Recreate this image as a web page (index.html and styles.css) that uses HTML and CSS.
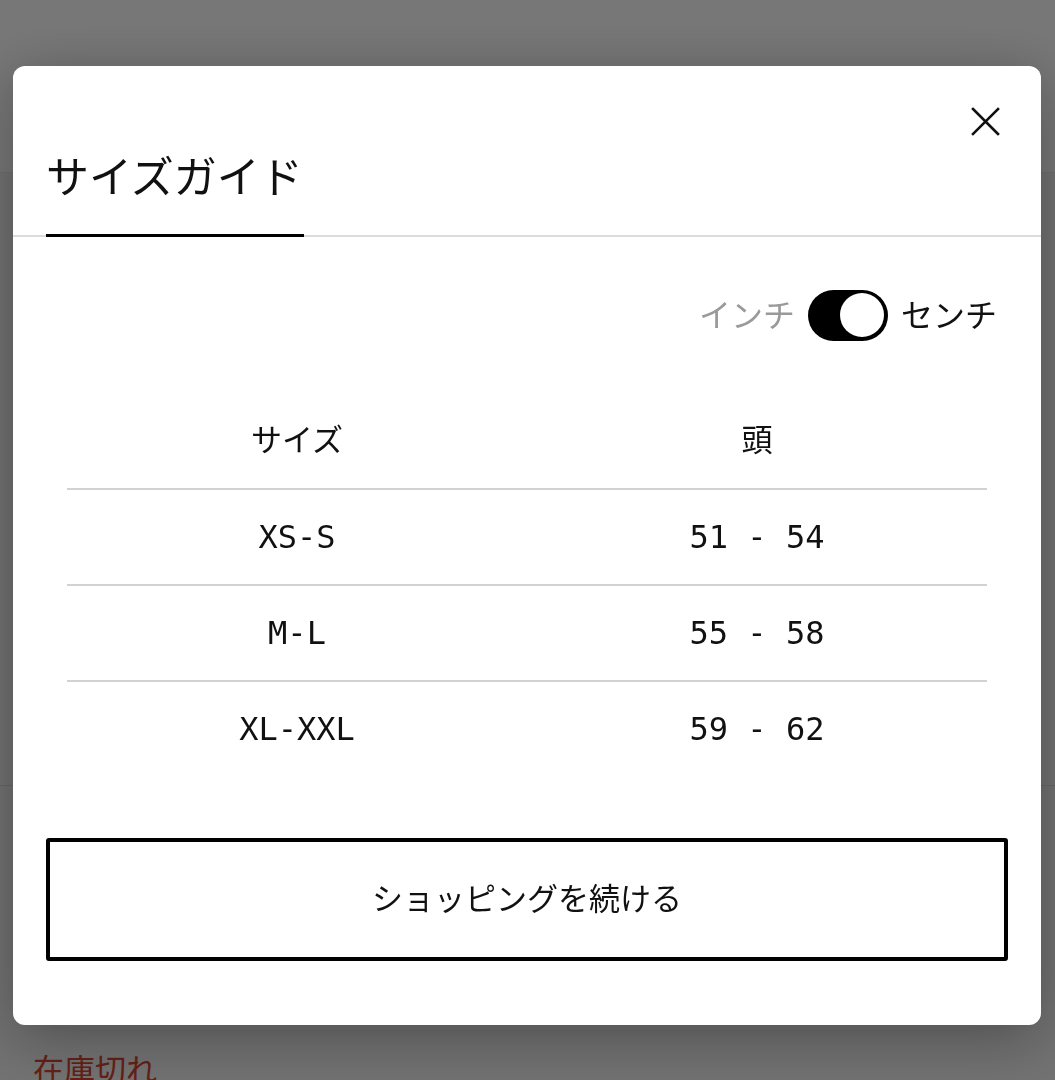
FILE: index.html
```html
<!DOCTYPE html>
<html lang="ja">
<head>
<meta charset="utf-8">
<title>サイズガイド</title>
<link rel="stylesheet" href="styles.css">
</head>
<body>
<div class="page">
  <div class="page-header"></div>
  <div class="page-main"></div>
  <div class="page-lower">
    <p class="stock">在庫切れ</p>
  </div>
</div>

<div class="overlay"></div>

<div class="modal" role="dialog" aria-label="サイズガイド">
  <div class="modal-head">
    <div class="tab">サイズガイド</div>
    <button class="close" aria-label="閉じる">
      <svg width="29" height="29" viewBox="0 0 29 29" fill="none" stroke="#111" stroke-width="2.6" stroke-linecap="square">
        <path d="M2 2 L27 27 M27 2 L2 27"/>
      </svg>
    </button>
  </div>

  <div class="modal-body">
    <div class="unit-row">
      <span class="unit unit-off">インチ</span>
      <span class="switch"><span class="knob"></span></span>
      <span class="unit unit-on">センチ</span>
    </div>

    <table class="size-table">
      <thead>
        <tr><th>サイズ</th><th>頭</th></tr>
      </thead>
      <tbody>
        <tr><td>XS-S</td><td>51 - 54</td></tr>
        <tr><td>M-L</td><td>55 - 58</td></tr>
        <tr><td>XL-XXL</td><td>59 - 62</td></tr>
      </tbody>
    </table>

    <button class="continue">ショッピングを続ける</button>
  </div>
</div>
</body>
</html>
```

FILE: styles.css
```css
html, body {
  margin: 0;
  padding: 0;
}
body {
  background: #ffffff;
  font-family: "Noto Sans CJK JP", "Noto Sans", sans-serif;
  height: 1080px;
  overflow: hidden;
}

.page-header {
  height: 172px;
  background: #f9f9f9;
  border-bottom: 1px solid #e6e6e6;
}
.page-main {
  height: 612px;
  background: #eeeeee;
  border-bottom: 1px solid #d8d8d8;
}
.page-lower {
  height: 295px;
  background: #eeeeee;
  padding: 0 33px;
}
.stock {
  margin: 0;
  padding-top: 262px;
  font-size: 31px;
  line-height: 40px;
  color: #d2432f;
}

.overlay {
  position: fixed;
  inset: 0;
  background: rgba(0, 0, 0, 0.52);
}

.modal {
  position: fixed;
  top: 66px;
  left: 13px;
  right: 14px;
  background: #ffffff;
  border-radius: 12px;
  box-shadow: 0 12px 60px rgba(0, 0, 0, 0.32);
  padding-bottom: 64px;
}

.modal-head {
  display: flex;
  justify-content: space-between;
  align-items: flex-start;
  padding: 0 33px;
  border-bottom: 2px solid #dcdcdc;
}
.tab {
  padding: 79px 1px 30px 0;
  font-size: 43px;
  line-height: 59px;
  color: #111111;
  border-bottom: 3px solid #000000;
  margin-bottom: -2px;
}
.close {
  margin: 41px 8px 0 0;
  padding: 0;
  border: 0;
  background: none;
  width: 29px;
  height: 29px;
  display: flex;
}

.modal-body {
  padding: 52px 33px 0;
}

.unit-row {
  display: flex;
  justify-content: flex-end;
  align-items: center;
  gap: 13px;
  height: 52px;
  padding-right: 11px;
}
.unit {
  font-size: 32px;
  line-height: 40px;
  margin-top: -4px;
}
.unit-off { color: #9a9a9a; }
.unit-on { color: #111111; }
.switch {
  width: 80px;
  height: 51px;
  border-radius: 26px;
  background: #000000;
  display: flex;
  align-items: center;
  justify-content: flex-end;
  padding-right: 4px;
  box-sizing: border-box;
}
.knob {
  width: 44px;
  height: 44px;
  border-radius: 50%;
  background: #ffffff;
}

.size-table {
  width: calc(100% - 42px);
  margin: 52px 20px 0 21px;
  border-collapse: collapse;
  table-layout: fixed;
}
.size-table th,
.size-table td {
  text-align: center;
  height: 94px;
  padding: 0;
  color: #111111;
}
.size-table th {
  font-weight: 400;
  font-size: 31px;
  height: 96px;
  padding-bottom: 6px;
  box-sizing: border-box;
  border-bottom: 2px solid #d2d2d2;
}
.size-table td {
  font-family: "DejaVu Sans Mono", "Liberation Mono", monospace;
  font-size: 32px;
}
.size-table tbody tr + tr td {
  border-top: 2px solid #d2d2d2;
}

.continue {
  display: block;
  width: 100%;
  height: 123px;
  margin-top: 62px;
  background: #ffffff;
  border: 4px solid #000000;
  border-radius: 3px;
  font-family: "Noto Sans CJK JP", "Noto Sans", sans-serif;
  font-size: 31px;
  color: #111111;
  padding: 0 0 6px;
}
```
